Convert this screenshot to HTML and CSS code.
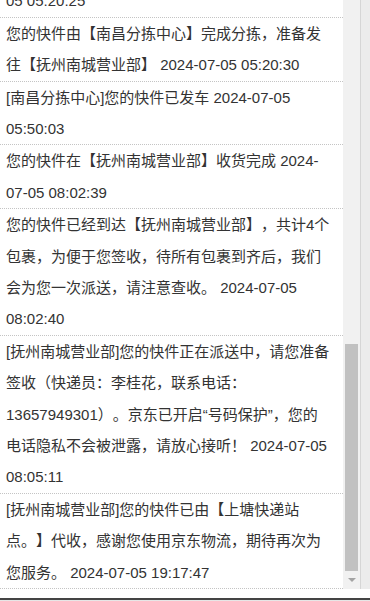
FILE: index.html
```html
<!DOCTYPE html>
<html lang="zh-CN">
<head>
    <meta charset="UTF-8">
    <meta name="viewport" content="width=device-width, initial-scale=1.0">
    <title>物流详情</title>
    <link rel="stylesheet" href="styles.css">
</head>
<body>
    <div class="pagina">
        <div class="visor">
            <div class="lista-rastreio">
                <div class="item">您的快件在【南昌分拣中心】进行分拣 2024-07-05 05:20:25</div>
                <div class="item">您的快件由【南昌分拣中心】完成分拣，准备发往【抚州南城营业部】 2024-07-05 05:20:30</div>
                <div class="item">[南昌分拣中心]您的快件已发车 2024-07-05 05:50:03</div>
                <div class="item">您的快件在【抚州南城营业部】收货完成 2024-07-05 08:02:39</div>
                <div class="item">您的快件已经到达【抚州南城营业部】，共计4个包裹，为便于您签收，待所有包裹到齐后，我们会为您一次派送，请注意查收。 2024-07-05 08:02:40</div>
                <div class="item">[抚州南城营业部]您的快件正在派送中，请您准备签收（快递员：李桂花，联系电话：13657949301）。京东已开启“号码保护”，您的电话隐私不会被泄露，请放心接听！ 2024-07-05 08:05:11</div>
                <div class="item">[抚州南城营业部]您的快件已由【上塘快递站点。】代收，感谢您使用京东物流，期待再次为您服务。 2024-07-05 19:17:47</div>
            </div>
            <div class="barra-rolagem">
                <div class="espaco"></div>
                <div class="polegar"></div>
                <div class="botao-baixo"><span class="seta"></span></div>
            </div>
            <div class="lateral"></div>
        </div>
        <div class="folga"></div>
        <div class="rodape"></div>
    </div>
</body>
</html>
```

FILE: styles.css
```css
body {
    font-family: "Liberation Sans", "Noto Sans CJK SC", sans-serif;
    font-size: 15px;
    color: #333;
    background: #fff;
    margin: 0;
}
.pagina {
    height: 601px;
    display: flex;
    flex-direction: column;
    overflow: hidden;
}
.visor {
    display: flex;
    height: 589px;
    flex: none;
}
.lista-rastreio {
    width: 343px;
    display: flex;
    flex-direction: column;
    justify-content: flex-end;
    overflow: hidden;
    background: #fff;
}
.item {
    flex-shrink: 0;
    padding: 0 12px 0 6px;
    line-height: 31.4px;
    border-bottom: 1px dotted #c4c4c4;
    text-spacing-trim: space-all;
}
.barra-rolagem {
    width: 17px;
    background: #f1f1f1;
    border-right: 1px solid #d6d6d6;
    display: flex;
    flex-direction: column;
    align-items: center;
}
.espaco {
    flex: 1;
}
.polegar {
    width: 13px;
    height: 227px;
    background: #c1c1c1;
}
.botao-baixo {
    height: 18px;
    width: 100%;
    display: flex;
    align-items: center;
    justify-content: center;
}
.seta {
    width: 0;
    height: 0;
    border-left: 4px solid transparent;
    border-right: 4px solid transparent;
    border-top: 4px solid #a3a3a3;
}
.lateral {
    flex: 1;
    background: #ececec;
}
.folga {
    height: 9px;
}
.rodape {
    flex: 1;
    border-top: 2px solid #444;
    background: #e6e6e6;
}
```
